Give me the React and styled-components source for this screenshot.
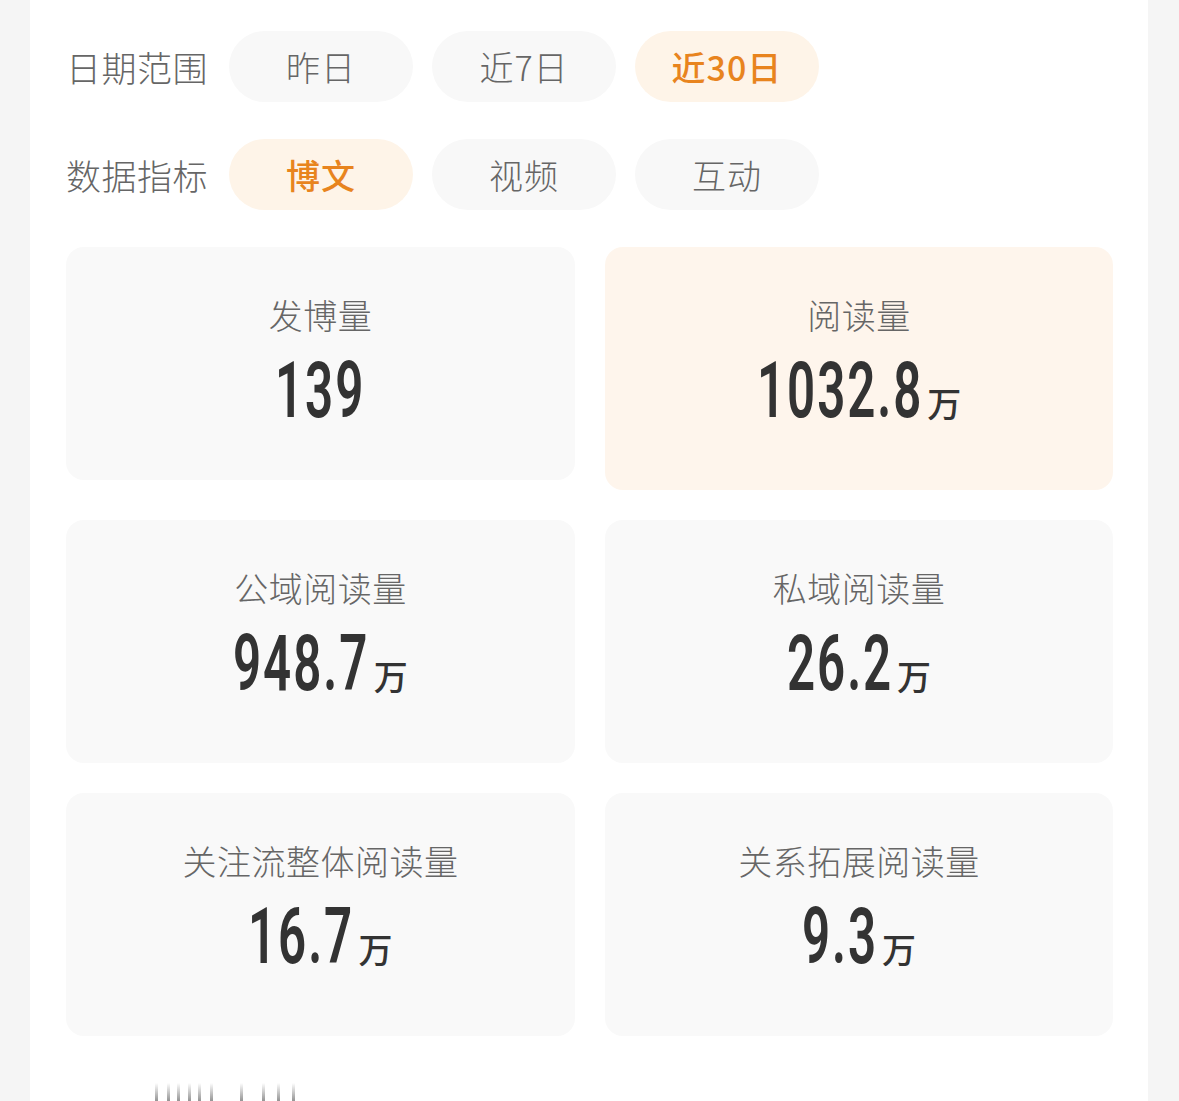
import React, { useLayoutEffect, useRef, useState } from "react";
import styled, { createGlobalStyle } from "styled-components";

const SQUEEZE = 0.64;

const GlobalStyle = createGlobalStyle`
  html, body {
    margin: 0;
    padding: 0;
    background: #f5f5f5;
    font-family: "Noto Sans CJK SC", "Noto Sans", sans-serif;
  }
`;

const Page = styled.div`
  height: 1101px;
  overflow: hidden;
  padding: 0 31px 0 30px;
`;

const Panel = styled.div`
  background: #fff;
  height: 100%;
  padding: 31px 35px 0 36px;
  box-sizing: border-box;
`;

const FilterRow = styled.div`
  display: flex;
  align-items: center;
  gap: 19px;
  margin-bottom: 37px;
`;

const FilterLabel = styled.div`
  width: 142px;
  margin-right: 2px;
  font-size: 35px;
  font-weight: 300;
  letter-spacing: 0.5px;
  color: #666;
  white-space: nowrap;
`;

const Pill = styled.div`
  width: 184px;
  height: 71px;
  border-radius: 36px;
  display: flex;
  align-items: center;
  justify-content: center;
  font-size: 34px;
  letter-spacing: 1px;
  background: ${(p) => (p.$active ? "#fef4e8" : "#f8f8f8")};
  color: ${(p) => (p.$active ? "#e8841e" : "#666")};
  font-weight: ${(p) => (p.$active ? 500 : 300)};
`;

const Grid = styled.div`
  display: grid;
  grid-template-columns: 509px 508px;
  column-gap: 30px;
  row-gap: 30px;
  align-items: start;
`;

const Card = styled.div`
  height: ${(p) => (p.$short ? "233px" : "243px")};
  margin-bottom: ${(p) => (p.$short ? "10px" : "0")};
  border-radius: 18px;
  background: ${(p) => (p.$active ? "#fef5ec" : "#f9f9f9")};
  display: flex;
  flex-direction: column;
  align-items: center;
  padding-top: 46px;
  box-sizing: border-box;
`;

const CardLabel = styled.div`
  font-size: 34px;
  font-weight: 300;
  line-height: 44px;
  color: #666;
  letter-spacing: 0.5px;
`;

const ValueLine = styled.div`
  margin-top: 14px;
  height: 80px;
  display: flex;
  align-items: baseline;
  color: #333;
`;

const Squeeze = styled.span`
  display: inline-block;
  overflow: visible;
  white-space: nowrap;
`;

const Digits = styled.span`
  display: inline-block;
  font-family: Roboto, "Liberation Sans", sans-serif;
  font-weight: 600;
  font-size: 77px;
  line-height: 80px;
  letter-spacing: 3px;
  transform: scaleX(${SQUEEZE});
  transform-origin: left center;
`;

const Unit = styled.span`
  font-size: 34px;
  margin-left: 4px;
  font-weight: 500;
  color: #333;
`;

const Footer = styled.div`
  margin-top: 47px;
  padding-left: 89px;
  line-height: 0;
`;

function Value({ num, unit }) {
  const ref = useRef(null);
  const [w, setW] = useState(null);
  useLayoutEffect(() => {
    if (ref.current) setW(ref.current.offsetWidth * SQUEEZE);
  }, [num]);
  return (
    <ValueLine>
      <Squeeze style={w ? { width: w } : undefined}>
        <Digits ref={ref}>{num}</Digits>
      </Squeeze>
      {unit && <Unit>{unit}</Unit>}
    </ValueLine>
  );
}

const cards = [
  { label: "发博量", num: "139", short: true },
  { label: "阅读量", num: "1032.8", unit: "万", active: true },
  { label: "公域阅读量", num: "948.7", unit: "万" },
  { label: "私域阅读量", num: "26.2", unit: "万" },
  { label: "关注流整体阅读量", num: "16.7", unit: "万" },
  { label: "关系拓展阅读量", num: "9.3", unit: "万" },
];

// tops of the next block's text, cut off by the screen edge
function FadedMarks() {
  const xs = [0, 12, 22, 33, 43, 55, 85, 107, 122, 137];
  return (
    <svg width="145" height="19" viewBox="0 0 145 19">
      <defs>
        <linearGradient id="fade" x1="0" y1="0" x2="0" y2="1">
          <stop offset="0" stopColor="#fff" />
          <stop offset="1" stopColor="#8e8e8e" />
        </linearGradient>
      </defs>
      {xs.map((x) => (
        <rect key={x} x={x} y="0" width="3" height="19" fill="url(#fade)" />
      ))}
    </svg>
  );
}

export default function App() {
  return (
    <>
      <GlobalStyle />
      <Page>
        <Panel>
          <FilterRow>
            <FilterLabel>日期范围</FilterLabel>
            <Pill>昨日</Pill>
            <Pill>近7日</Pill>
            <Pill $active>近30日</Pill>
          </FilterRow>
          <FilterRow>
            <FilterLabel>数据指标</FilterLabel>
            <Pill $active>博文</Pill>
            <Pill>视频</Pill>
            <Pill>互动</Pill>
          </FilterRow>
          <Grid>
            {cards.map((c) => (
              <Card key={c.label} $active={c.active} $short={c.short}>
                <CardLabel>{c.label}</CardLabel>
                <Value num={c.num} unit={c.unit} />
              </Card>
            ))}
          </Grid>
          <Footer>
            <FadedMarks />
          </Footer>
        </Panel>
      </Page>
    </>
  );
}
